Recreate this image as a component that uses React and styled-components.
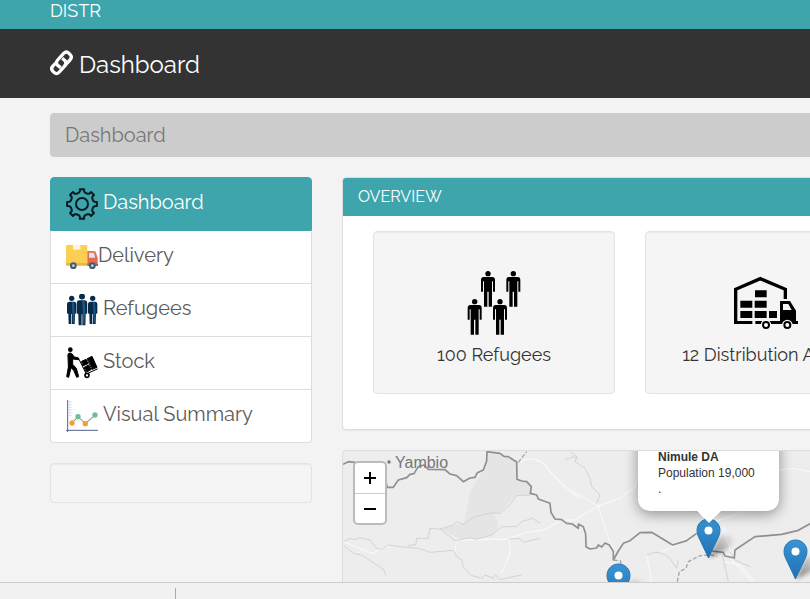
import React from 'react';
import styled, { createGlobalStyle } from 'styled-components';

const GlobalStyle = createGlobalStyle`
  * { box-sizing: border-box; }
  body {
    margin: 0;
    overflow: hidden;
    background: #f3f3f3;
    color: #333;
    font-family: Raleway, Lato, "Open Sans", sans-serif;
    font-size: 18px;
  }
`;

const Page = styled.div`
  display: flex;
  flex-direction: column;
  height: 100vh;
  overflow: hidden;
`;
const Scroller = styled.div`
  flex: 1;
  min-height: 0;
  overflow: hidden;
`;
const StatusBar = styled.footer`
  flex: none;
  height: 17px;
  padding: 5px 0 0 175px;
  border-top: 1px solid #cdcdcd;
  background: #f1f1f1;
`;
const StatusDivider = styled.div`
  width: 1px;
  height: 11px;
  background: #aaa;
`;
const Navbar = styled.nav`
  display: flex;
  height: 29px;
  padding: 0 50px;
  background: #3ea5ad;
`;
const Brand = styled.a`
  color: #fff;
  font-size: 18px;
  line-height: 22px;
  text-decoration: none;
`;
const Header = styled.header`
  display: flex;
  align-items: center;
  gap: 5px;
  height: 69px;
  padding: 0 50px;
  background: #333;
  color: #fff;
`;
const Title = styled.h1`
  margin: 0;
  padding-top: 2px;
  font-size: 24px;
  font-weight: 400;
  line-height: 30px;
`;
const Content = styled.div`
  display: grid;
  grid-template-columns: 262px minmax(847px, 1fr);
  gap: 20px 30px;
  padding: 15px 50px;
`;
const Breadcrumb = styled.ol`
  grid-column: 1 / -1;
  margin: 0;
  padding: 8px 15px;
  border-radius: 4px;
  background: #ccc;
  color: #777;
  font-size: 20px;
  line-height: 28px;
  list-style: none;
`;
const Sidebar = styled.aside`
  display: flex;
  flex-direction: column;
  gap: 20px;
`;
const Menu = styled.nav`
  border-radius: 4px;
  background: #fff;
`;
const MenuLink = styled.a`
  display: flex;
  gap: ${(p) => (p.$tight ? 0 : 5)}px;
  height: 53px;
  padding: 10px 15px;
  border: 1px solid ${(p) => (p.$active ? '#3ea5ad' : '#ddd')};
  border-top-width: 0;
  background: ${(p) => (p.$active ? '#3ea5ad' : '#fff')};
  color: ${(p) => (p.$active ? '#fff' : '#5a5a5a')};
  font-size: 20px;
  line-height: 28px;
  text-decoration: none;
  &:first-child {
    height: 54px;
    border-top-width: 1px;
    border-radius: 4px 4px 0 0;
  }
  &:last-child { border-radius: 0 0 4px 4px; }
`;
const Well = styled.div`
  height: 40px;
  border: 1px solid #e3e3e3;
  border-radius: 4px;
  background: #f5f5f5;
  box-shadow: inset 0 1px 1px rgba(0, 0, 0, 0.05);
`;
const Main = styled.main`
  display: flex;
  flex-direction: column;
  gap: 20px;
`;
const Panel = styled.section`
  border: 1px solid #ddd;
  border-radius: 4px;
  overflow: hidden;
  background: #fff;
  box-shadow: 0 1px 1px rgba(0, 0, 0, 0.05);
`;
const PanelTitle = styled.h2`
  margin: 0;
  padding: 9px 15px;
  background: #3ea5ad;
  color: #fff;
  font-size: 16px;
  font-weight: 400;
  line-height: 20px;
`;
const Cards = styled.div`
  display: grid;
  grid-template-columns: repeat(3, minmax(242px, 1fr));
  gap: 30px;
  padding: 15px 30px 35px;
`;
const Card = styled.div`
  display: flex;
  flex-direction: column;
  align-items: center;
  gap: 8px;
  padding: 39px 16px 26px;
  border: 1px solid #e3e3e3;
  border-radius: 4px;
  background: #f5f5f5;
  box-shadow: inset 0 1px 1px rgba(0, 0, 0, 0.05);
`;
const CardLabel = styled.span`
  font-size: 18px;
  line-height: 24px;
  color: #333;
  white-space: nowrap;
`;
const MapPanel = styled.section`
  position: relative;
  height: 400px;
  border: 1px solid #ddd;
  border-radius: 4px;
  overflow: hidden;
  background: #ededed;
  font-family: "Liberation Sans", Arial, sans-serif;
`;
const Terrain = styled.svg`
  display: block;
`;
const ZoomControl = styled.div`
  position: absolute;
  left: 10px;
  top: 10px;
  border: 2px solid #bbb;
  border-radius: 5px;
  background: #fff;
`;
const ZoomButton = styled.button`
  display: flex;
  align-items: center;
  justify-content: center;
  width: 30px;
  height: 30px;
  padding: 0;
  border: 0;
  background: transparent;
  color: #000;
  & + & { border-top: 1px solid #ccc; }
`;
const City = styled.span`
  position: absolute;
  left: 52px;
  top: 3px;
  color: #777;
  font-size: 16px;
  line-height: 18px;
`;
const Popup = styled.div`
  position: absolute;
  left: 295px;
  top: -20px;
  width: 141px;
  padding: 18px 20px 14px;
  border-radius: 12px;
  background: #fff;
  color: #333;
  font-size: 12px;
  line-height: 16px;
  box-shadow: 0 3px 14px rgba(0, 0, 0, 0.4);
  white-space: nowrap;
`;
const PopupTip = styled.svg`
  position: absolute;
  left: 354px;
  top: 60px;
`;
const Marker = styled.svg`
  position: absolute;
  left: ${(p) => p.$x}px;
  top: ${(p) => p.$y}px;
`;

const LinkIcon = () => (
  <svg width="24" height="28" viewBox="0 0 72 84" fill="none" stroke="#fff" strokeWidth="10" strokeLinejoin="round">
    <path d="M32 53L24 47Q15 39 23 30L41 10Q49 2 57 10L60 13Q68 21 60 30L44 47" />
    <path d="M37 25L45 32Q51 39 45 47L28 66Q20 75 12 67L9 64Q1 56 9 48L17 39" />
  </svg>
);

const gearPoints = () => {
  const pts = [];
  for (let i = 0; i < 8; i += 1) {
    const a = (i * Math.PI) / 4 - Math.PI / 2;
    [[-0.29, 35], [-0.17, 38], [-0.14, 45], [0.14, 45], [0.17, 38], [0.29, 35]].forEach(([d, r]) => {
      pts.push(`${(48 + r * Math.cos(a + d)).toFixed(1)},${(48 + r * Math.sin(a + d)).toFixed(1)}`);
    });
  }
  return pts.join(' ');
};

const GearIcon = () => (
  <svg width="32" height="32" viewBox="0 0 96 96" fill="none" stroke="#061c22" strokeWidth="6" strokeLinejoin="round">
    <polygon points={gearPoints()} />
    <circle cx="48" cy="48" r="18" />
  </svg>
);

const TruckIcon = () => (
  <svg width="32" height="32" viewBox="0 0 96 96">
    <path d="M4 12H60Q64 12 64 16V73H4Q0 73 0 69V16Q0 12 4 12Z" fill="#fbcf52" />
    <path d="M21 12H43V27L38 25L32 27L27 25L21 27Z" fill="#fff3dc" />
    <path d="M64 30H84Q88 30 90 35L95 52V72H64Z" fill="#e86850" />
    <path d="M69 35H84L88 50H69Z" fill="#d9e5ee" />
    <path d="M0 66H64V74H0Z" fill="#e5b74a" />
    <path d="M64 68H96V75H64Z" fill="#8a6570" />
    <circle cx="22" cy="74" r="10" fill="#465a70" /><circle cx="22" cy="74" r="4" fill="#c5d1db" />
    <circle cx="79" cy="74" r="10" fill="#465a70" /><circle cx="79" cy="74" r="4" fill="#c5d1db" />
  </svg>
);

const BluePerson = ({ x, y, s = 1 }) => (
  <g transform={`translate(${x} ${y}) scale(${s})`}>
    <circle cx="0" cy="7" r="8" />
    <path d="M-8 17H8Q14 18 14 24V50Q14 54 10 53L9 84H1V54H-1V84H-9L-10 53Q-14 54-14 50V24Q-14 18-8 17Z" />
    <path d="M1 19H7L9 48L6 80H3L2 50Z" fill="#1d5580" />
  </g>
);

const RefugeesIcon = () => (
  <svg width="32" height="32" viewBox="0 0 96 96" fill="#082b49">
    <BluePerson x={17} y={6} />
    <BluePerson x={80} y={6} />
    <BluePerson x={48} y={0} s={1.12} />
  </svg>
);

const StockIcon = () => (
  <svg width="32" height="32" viewBox="0 0 96 96" stroke="#000" strokeLinecap="round" strokeLinejoin="round">
    <circle cx="13" cy="8" r="7" stroke="none" />
    <path d="M6 22Q7 18 12 18Q18 18 21 24L23 29L38 33V38L20 36V52L31 64L38 89L32 91L23 70L15 62L8 91L2 89L7 61Z" strokeWidth="3" />
    <path d="M39 37L61 81L94 66" fill="none" strokeWidth="3" />
    <path d="M47 43L60 37L66 50L52 56ZM64 35L78 28L93 61L79 67ZM55 61L68 54L75 68L62 75Z" strokeWidth="3" />
    <circle cx="63" cy="85" r="6" fill="#fff" strokeWidth="5" />
  </svg>
);

const ChartIcon = () => (
  <svg width="32" height="32" viewBox="0 0 96 96" fill="none">
    <path d="M5 0V96M0 91H96" stroke="#57608a" strokeWidth="3" />
    <path d="M9 6H16M9 14H16M9 22H16M9 30H16M9 38H16M9 46H16" stroke="#cfcbe3" strokeWidth="3" />
    <path d="M18 69L36 50L58 71L87 45" stroke="#746e8c" strokeWidth="3" />
    <circle cx="18" cy="69" r="8" fill="#f2a22b" /><circle cx="58" cy="71" r="8" fill="#f2a22b" />
    <circle cx="36" cy="50" r="8" fill="#74bd91" /><circle cx="87" cy="45" r="8" fill="#74bd91" />
  </svg>
);

const Person = ({ x, y }) => (
  <g transform={`translate(${x} ${y})`}>
    <circle cx="0" cy="8" r="8" />
    <path d="M-13 18H13Q21 18 21 27V62H15V31H12V107H2V62H-2V107H-12V31H-15V62H-21V27Q-21 18-13 18Z" />
  </g>
);

const CrowdIcon = () => (
  <svg width="64" height="64" viewBox="0 0 192 192">
    <Person x={78} y={0} /><Person x={154} y={0} />
    <Person x={38} y={84} /><Person x={114} y={84} />
  </svg>
);

const WarehouseIcon = () => (
  <svg width="64" height="64" viewBox="0 0 192 192">
    <path d="M5 157V55L79 23L154 55V84" fill="none" stroke="#000" strokeWidth="10" />
    <path d="M0 150H55V159H0ZM64 150H138V159H64Z" />
    <path d="M63 58H98V79H63ZM19 89H55V110H19ZM62 89H98V110H62ZM19 120H55V141H19ZM62 120H98V141H62ZM105 120H129V141H105Z" />
    <path d="M138 90H168L186 119V150H192V159H138ZM147 99V117H173L163 99Z" fillRule="evenodd" />
    <circle cx="96" cy="162" r="16" fill="#f5f5f5" /><circle cx="160" cy="162" r="16" fill="#f5f5f5" />
    <circle cx="96" cy="162" r="9" fill="#fff" stroke="#000" strokeWidth="6" />
    <circle cx="160" cy="162" r="9" fill="#fff" stroke="#000" strokeWidth="6" />
  </svg>
);

const Pin = ({ x, y }) => (
  <Marker $x={x} $y={y} width="50" height="44" viewBox="0 0 50 44" role="img" aria-label="Distribution area">
    <defs>
      <linearGradient id="pin" x1="0" y1="0" x2="0" y2="1">
        <stop offset="0" stopColor="#3a94d3" /><stop offset="1" stopColor="#1e70b4" />
      </linearGradient>
      <linearGradient id="shade" x1="0" y1="1" x2="1" y2="0">
        <stop offset="0" stopColor="#000" stopOpacity="0.5" /><stop offset="1" stopColor="#000" stopOpacity="0" />
      </linearGradient>
      <filter id="soft"><feGaussianBlur stdDeviation="2" /></filter>
    </defs>
    <path d="M13 40L22 20Q30 14 37 18Q38 26 30 32Z" fill="url(#shade)" filter="url(#soft)" />
    <path d="M12.5 1C6 1 1 6 1 12.5C1 16 2.5 19 4 22L12.5 40L21 22C22.5 19 24 16 24 12.5C24 6 19 1 12.5 1Z" fill="url(#pin)" stroke="#2a76b2" />
    <circle cx="12.5" cy="12.5" r="4" fill="#fff" />
  </Marker>
);

const MapDrawing = () => (
  <Terrain width="847" height="400" viewBox="9 18 2541 1200" fill="none" strokeLinejoin="round" aria-hidden="true">
    <path d="M441 20L480 25L530 50L531 103L568 118L572 150L530 152L505 175L480 205L455 204L473 225L472 250L455 270L420 282L370 285L340 272L300 252L340 240L372 234L378 205L390 140L425 85L440 45Z" fill="#e5e5e5" />
    <g stroke="#f7f7f7" strokeWidth="4">
      <path d="M540 50Q580 30 615 60Q650 110 720 160M470 285L505 282L560 262L610 255L665 226L705 225L745 200L775 183L840 160L885 125L900 70" />
      <path d="M505 270L512 320L485 385M775 183L795 250L815 305L822 345M775 183L690 135M10 290L60 310L95 325L150 303M345 318L350 285L505 282" />
      <path d="M1150 245L1180 350L1235 410M1150 350L1200 360L1240 405M1110 235L1210 200M1315 75L1360 70L1410 80M960 325L1040 280M920 330L935 410" />
    </g>
    <g stroke="#d3d3d3" strokeWidth="3">
      <path d="M10 290L30 280L45 284L60 278L90 285L108 308L125 314L145 300L180 305L235 310L270 322L340 316L350 335L365 345L370 365L395 392L425 399L435 390L460 400L466 388L480 404L520 395L545 390" />
      <path d="M10 300L40 325L65 330L95 350L130 372L138 392M205 302L228 298L230 280L265 280L270 250L300 252L340 240L350 230L370 238L400 217L450 204L480 205L510 180L530 152L572 150" />
      <path d="M300 252L345 287L390 278L410 283L455 270L485 245L530 245L545 230L578 220L600 235M505 282L540 280L550 292L600 280" />
      <path d="M690 20L710 35L705 50L735 70L750 100L755 125L780 150L770 175M675 45L700 35L715 42M920 330Q960 310 990 340L1010 370L1015 345" />
      <path d="M1035 160L1060 195L1085 208M1145 320L1165 410M1170 320L1185 345L1230 365" />
    </g>
    <g stroke="#8f8f8f" strokeWidth="5">
      <path d="M9 58L25 50L45 52M138 110L142 127H160L175 105L200 98L210 88L222 86L235 65L252 60L265 73L315 74L330 87L350 92L370 110L390 99L405 97L412 83L430 75L440 48L441 20L480 25L492 34L505 35L530 51L531 103L545 108L560 110L574 125L571 145L590 150L595 162L630 175L633 202L645 222L665 224L680 235L697 237L715 250V237L730 245L737 267L738 305L750 312L770 309L775 300L785 306L795 294L808 300L820 320L820 345L835 318L850 295L870 287L900 263L935 262L998 300L1040 287L1070 265" />
      <path d="M1115 318L1150 322L1155 333L1183 339L1185 315L1245 275L1325 268L1375 256L1410 236L1520 200" />
      <path d="M1012 410L1018 380L1038 370L1045 350L1080 332L1115 330L1130 335M535 52L560 20M821 345L842 348L842 380" strokeWidth="4" strokeDasharray="12 6" stroke="#a5a5a5" />
    </g>
    <circle cx="147" cy="51" r="5" fill="#777" />
  </Terrain>
);

const menu = [
  { label: 'Dashboard', icon: <GearIcon />, active: true },
  { label: 'Delivery', icon: <TruckIcon />, tight: true },
  { label: 'Refugees', icon: <RefugeesIcon /> },
  { label: 'Stock', icon: <StockIcon /> },
  { label: 'Visual Summary', icon: <ChartIcon /> },
];

export default function App() {
  return (
    <Page>
      <GlobalStyle />
      <Scroller>
        <Navbar><Brand href="#home">DISTR</Brand></Navbar>
        <Header>
          <LinkIcon />
          <Title>Dashboard</Title>
        </Header>
        <Content>
          <Breadcrumb><li>Dashboard</li></Breadcrumb>
          <Sidebar>
            <Menu>
              {menu.map((m) => (
                <MenuLink key={m.label} href="#section" $active={m.active} $tight={m.tight}>
                  {m.icon}
                  <span>{m.label}</span>
                </MenuLink>
              ))}
            </Menu>
            <Well />
          </Sidebar>
          <Main>
            <Panel>
              <PanelTitle>OVERVIEW</PanelTitle>
              <Cards>
                <Card><CrowdIcon /><CardLabel>100 Refugees</CardLabel></Card>
                <Card><WarehouseIcon /><CardLabel>12 Distribution Areas</CardLabel></Card>
              </Cards>
            </Panel>
            <MapPanel aria-label="Map">
              <MapDrawing />
              <City>Yambio</City>
              <Pin x={353} y={67} />
              <Pin x={440} y={88} />
              <Pin x={263} y={112} />
              <Popup><strong>Nimule DA</strong><br />Population 19,000<br />.</Popup>
              <PopupTip width="24" height="13" viewBox="0 0 24 13"><path d="M0 0H24L12 12Z" fill="#fff" /></PopupTip>
              <ZoomControl>
                <ZoomButton aria-label="Zoom in">
                  <svg width="12" height="12" viewBox="0 0 12 12"><path d="M0 6H12M6 0V12" stroke="#000" strokeWidth="2" /></svg>
                </ZoomButton>
                <ZoomButton aria-label="Zoom out">
                  <svg width="12" height="12" viewBox="0 0 12 12"><path d="M0 6H12" stroke="#000" strokeWidth="2" /></svg>
                </ZoomButton>
              </ZoomControl>
            </MapPanel>
          </Main>
        </Content>
      </Scroller>
      <StatusBar><StatusDivider /></StatusBar>
    </Page>
  );
}
